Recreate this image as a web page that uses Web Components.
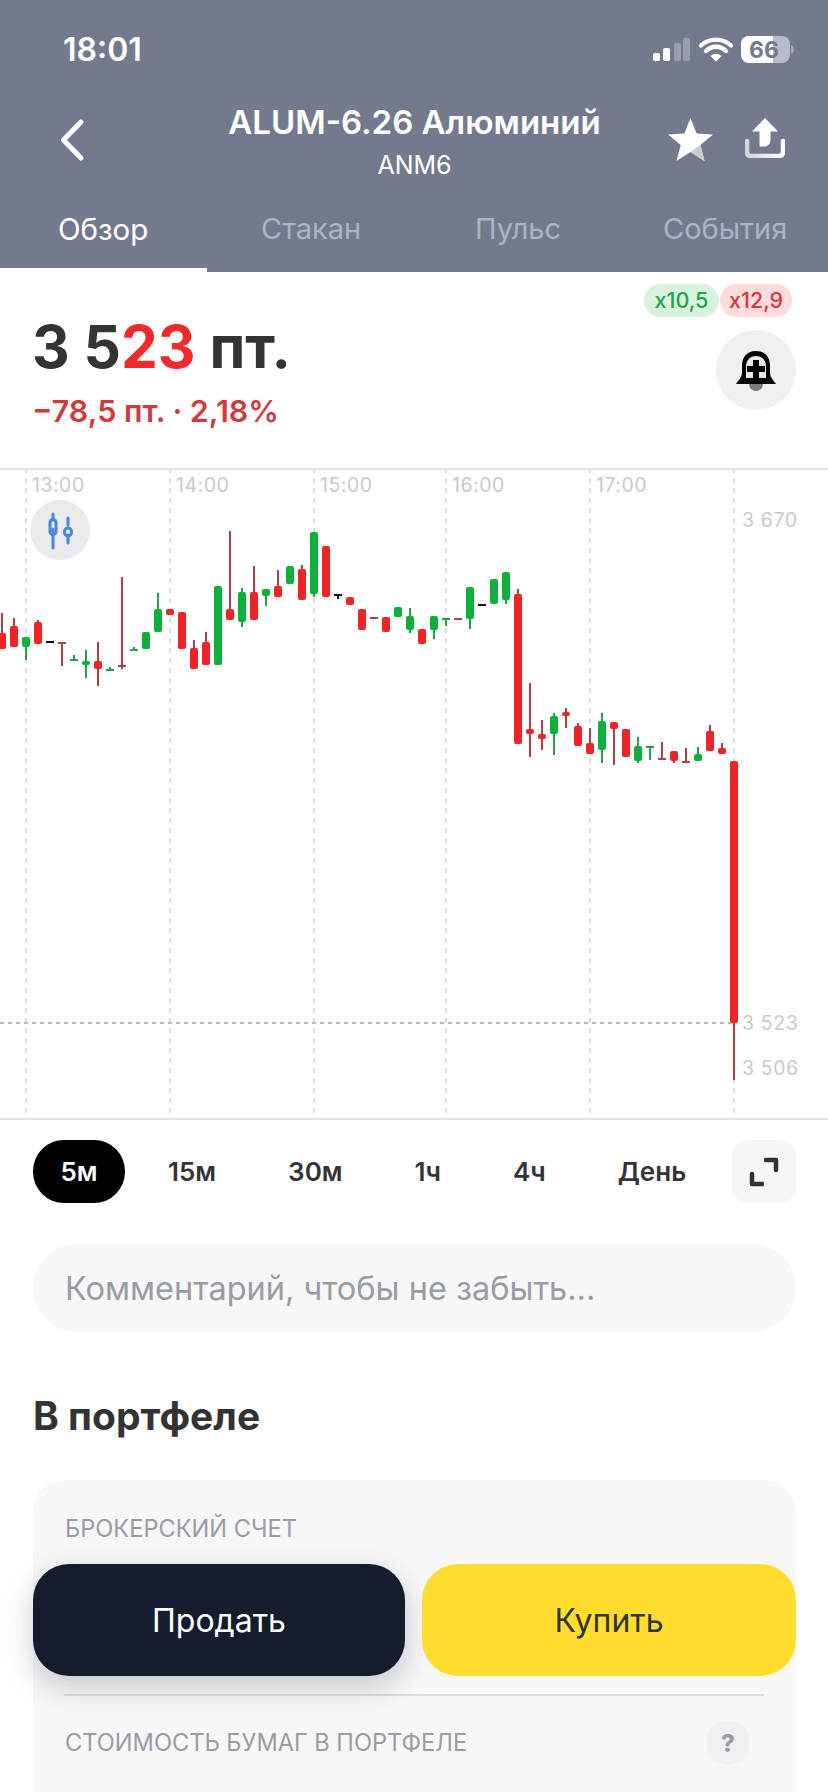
<!DOCTYPE html>
<html lang="ru">
<head>
<meta charset="utf-8">
<title>ALUM-6.26</title>
<style>
  html, body { margin: 0; padding: 0; background: #fff; }
  body { width: 828px; height: 1792px; overflow: hidden; position: relative; font-family: Inter, "Liberation Sans", sans-serif; color: #333; }
</style>
</head>
<body>
<app-header></app-header>
<quote-panel></quote-panel>
<candle-chart></candle-chart>
<period-bar></period-bar>
<note-field>Комментарий, чтобы не забыть...</note-field>
<portfolio-card></portfolio-card>
<trade-buttons></trade-buttons>

<script>
const FONT = 'Inter, "Liberation Sans", sans-serif';

class AppHeader extends HTMLElement {
  constructor() {
    super();
    this.attachShadow({ mode: 'open' });
    this.shadowRoot.innerHTML = `
      <style>
        :host { display: block; height: 272px; background: #747a8e; color: #fff; font-family: ${FONT}; }
        .status { height: 100px; box-sizing: border-box; padding: 36px 33px 0 63px; display: flex; justify-content: space-between; align-items: flex-start; }
        .time { font-size: 32px; font-weight: 600; line-height: 28px; }
        .nav { height: 96px; display: flex; align-items: flex-start; padding: 0 43px 0 60px; box-sizing: border-box; }
        .nav svg { display: block; flex: none; }
        .back { margin-top: 19px; }
        .titles { flex: 1; text-align: center; margin-right: -77px; white-space: nowrap; }
        .title { font-size: 33px; font-weight: 600; line-height: 44px; }
        .sub { font-size: 25px; line-height: 34px; margin-top: 4px; }
        .star { margin-top: 18px; position: relative; }
        .share { margin: 18px 0 0 32px; }
        .tabs { display: flex; height: 76px; position: relative; font-size: 29px; line-height: 34px; color: #aeb3c3; }
        .tabs span { position: absolute; top: 16px; }
        .tabs .on { color: #fff; font-size: 29.500px; }
        .tabs i { position: absolute; left: 0; bottom: 0; width: 207px; height: 4px; background: #fff; }
      </style>
      <div class="status">
        <span class="time">18:01</span>
        <svg width="142" height="28" viewBox="0 0 142 28">
          <rect x="0" y="17" width="7" height="8" rx="2" fill="#fff"/>
          <rect x="10" y="12" width="7" height="13" rx="2" fill="#fff"/>
          <rect x="21" y="7" width="7" height="18" rx="2" fill="#9a9fae"/>
          <rect x="30" y="2" width="7" height="23" rx="2" fill="#9a9fae"/>
          <path d="M48 9.500a22 22 0 0 1 30 0M53 15a14 14 0 0 1 20 0" fill="none" stroke="#fff" stroke-width="4.400" stroke-linecap="round"/>
          <path d="M57.500 20a8 8 0 0 1 11 0L63 25.500z" fill="#fff"/>
          <rect x="88" y="0" width="49" height="27" rx="8" fill="#b8bbc8"/>
          <path d="M96 0h24v27H96a8 8 0 0 1-8-8V8a8 8 0 0 1 8-8z" fill="#fff"/>
          <path d="M138 9a5 5 0 0 1 3 4.500a5 5 0 0 1-3 4.500z" fill="#a4a8b7"/>
          <text x="111" y="21.500" text-anchor="middle" font-size="23" font-weight="700" fill="#747a8e" font-family='${FONT}'>66</text>
        </svg>
      </div>
      <div class="nav">
        <svg class="back" width="24" height="42" viewBox="0 0 24 42"><path d="M21 3 3.500 21 21 39" fill="none" stroke="#fff" stroke-width="5" stroke-linecap="round" stroke-linejoin="round"/></svg>
        <div class="titles">
          <div class="title">ALUM-6.26 Алюминий</div>
          <div class="sub">ANM6</div>
        </div>
        <svg class="star" width="45" height="43" viewBox="0 0 45 43">
          <path d="M22.500 0l6.100 15.600 16.400 1-12.700 10.500 4.200 15.900-14-8.900-14 8.900 4.200-15.900L0 16.600l16.400-1z" fill="#fff"/>
          <path d="M22.500 34.100l14 8.900-4.200-15.900z" fill="#c9ccd6"/>
        </svg>
        <svg class="share" width="40" height="40" viewBox="0 0 40 40">
          <path d="M2 23v11q0 4 4 4h28q4 0 4-4V23" fill="none" stroke="url(#tray)" stroke-width="4.500" stroke-linecap="round"/>
          <path d="M20 0 33 13.500H25.500V22q0 5-5 6.500h-6V13.500H7z" fill="#fff"/>
          <defs><linearGradient id="tray" x1="0" x2="1" y1="0" y2="0"><stop offset="0" stop-color="#d3d5dd"/><stop offset="1" stop-color="#fff"/></linearGradient></defs>
        </svg>
      </div>
      <div class="tabs">
        <span class="on" style="left:58px">Обзор</span>
        <span style="left:261px">Стакан</span>
        <span style="left:475px">Пульс</span>
        <span style="left:663px">События</span>
        <i></i>
      </div>`;
  }
}
customElements.define('app-header', AppHeader);

class QuotePanel extends HTMLElement {
  constructor() {
    super();
    this.attachShadow({ mode: 'open' });
    this.shadowRoot.innerHTML = `
      <style>
        :host { display: flex; height: 196px; box-sizing: border-box; justify-content: space-between; padding: 12px 32px 0 32px; font-family: ${FONT}; }
        .price { font-size: 58.500px; font-weight: 700; line-height: 70px; margin-top: 28px; color: #333; }
        .price b { color: #ee2a2a; font-weight: 700; }
        .delta { font-size: 30.500px; font-weight: 600; line-height: 34px; margin-top: 12px; color: #d03a3e; white-space: nowrap; }
        .side { display: flex; flex-direction: column; align-items: flex-end; }
        .badges { display: flex; gap: 1px; margin-right: 4px; }
        .badge { height: 33px; line-height: 33px; border-radius: 17px; font-size: 21.500px; font-weight: 500; text-align: center; }
        .up { width: 75px; background: #d7f3dd; color: #1fa64b; }
        .down { width: 72px; background: #fddcdc; color: #d9363e; }
        .bell { width: 80px; height: 80px; border-radius: 50%; background: #eff0f2; margin-top: 13px; display: flex; align-items: center; justify-content: center; }
      </style>
      <div>
        <div class="price">3 5<b>23</b> пт.</div>
        <div class="delta">−78,5 пт. · 2,18%</div>
      </div>
      <div class="side">
        <div class="badges"><span class="badge up">x10,5</span><span class="badge down">x12,9</span></div>
        <div class="bell">
          <svg width="40" height="40" viewBox="0 0 40 40" style="margin-top:1px">
            <path d="M13 33a7 7 0 0 0 14 0z" fill="#7b7b7d"/>
            <path d="M20 0C10 0 6 7 6 15v6.500C6 26 3 29 0 33h40c-3-4-6-7-6-11.500V15C34 7 30 0 20 0z" fill="#000"/>
            <path d="M20 5c-6 0-10 4-10 11v11h20V16C30 9 26 5 20 5z" fill="#e6e7ea"/>
            <path d="M17 9h6v6h6v6h-6v6h-6v-6h-6v-6h6z" fill="#000"/>
          </svg>
        </div>
      </div>`;
  }
}
customElements.define('quote-panel', QuotePanel);

// [x, high, bodyTop, bodyBottom, low, colour]
const CANDLES = [
  [2,613,633,649,649,'r'],[14,618,626,647,647,'r'],[26,637,637,647,660,'g'],[38,620,622,644,644,'r'],
  [50,642,642,642,642,'k'],[62,643,643,643,666,'r'],[74,655,660,660,660,'g'],[86,650,661,665,678,'g'],
  [98,642,661,669,686,'r'],[110,667,670,670,670,'g'],[122,577,666,666,669,'r'],[134,647,650,650,650,'g'],
  [146,632,632,649,649,'g'],[158,593,609,632,632,'g'],[170,609,609,615,615,'r'],[182,612,612,649,649,'r'],
  [194,640,648,669,669,'r'],[206,632,642,665,665,'r'],[218,586,586,665,665,'g'],[230,531,609,620,620,'r'],
  [242,588,592,622,627,'g'],[254,566,592,620,620,'r'],[266,589,589,596,606,'g'],[278,570,586,597,597,'r'],
  [290,566,566,584,584,'g'],[302,565,569,600,600,'r'],[314,532,532,594,597,'g'],[326,546,546,597,597,'r'],
  [338,595,595,595,599,'k'],[350,597,597,605,605,'r'],[362,609,609,630,630,'r'],[374,618,618,618,618,'r'],
  [386,617,617,632,632,'r'],[398,607,607,617,617,'g'],[410,608,616,630,633,'g'],[422,629,629,644,644,'r'],
  [434,616,616,630,639,'g'],[446,619,619,619,626,'g'],[458,619,619,619,619,'r'],[470,587,587,619,629,'g'],
  [482,605,605,605,605,'k'],[494,579,579,604,604,'g'],[506,572,572,600,604,'g'],[518,589,594,744,744,'r'],
  [530,683,729,734,757,'r'],[542,720,734,739,750,'r'],[554,713,716,734,755,'g'],[566,708,712,716,728,'r'],
  [578,723,726,746,746,'r'],[590,728,743,754,754,'r'],[602,713,721,750,763,'g'],[614,722,722,729,765,'r'],
  [626,729,729,757,757,'r'],[638,737,746,761,763,'g'],[650,747,747,747,760,'g'],[662,742,759,759,759,'r'],
  [674,751,751,761,763,'r'],[686,748,762,762,762,'r'],[698,747,754,761,761,'g'],[710,725,731,751,751,'r'],
  [722,743,748,754,754,'r'],[734,761,761,1023,1080,'r']
];
const BODY = { r: '#ee2427', g: '#0eb03c', k: '#111' };
const WICK = { r: '#a5444b', g: '#2f9a52', k: '#111' };

class CandleChart extends HTMLElement {
  constructor() {
    super();
    this.attachShadow({ mode: 'open' });
    // svg coordinates are page y minus 468, where the chart starts
    const top = 468;
    const grid = [26, 170, 314, 446, 590, 734].map(x =>
      `<line x1="${x}" x2="${x}" y1="0" y2="651" stroke="#dcdcdc" stroke-width="2" stroke-dasharray="5 5"/>`).join('');
    const candles = CANDLES.map(([x, hi, a, b, lo, c]) => {
      let s = '';
      if (lo > hi) s += `<rect x="${x - 1}" y="${hi - top}" width="2" height="${lo - hi}" fill="${WICK[c]}"/>`;
      if (b > a) {
        s += `<rect x="${x - 4}" y="${a - top}" width="8" height="${b - a}" rx="2" fill="${BODY[c]}"/>`;
      } else {
        s += `<rect x="${x - 4}" y="${a - top - 1}" width="8" height="2" fill="${c === 'k' ? BODY.k : WICK[c]}"/>`;
      }
      return s;
    }).join('');
    const labels = [[32,'13:00'],[176,'14:00'],[320,'15:00'],[452,'16:00'],[596,'17:00']]
      .map(([x, t]) => `<span class="t" style="left:${x}px">${t}</span>`).join('');
    const prices = [[50,'3 670'],[553,'3 523'],[598,'3 506']]
      .map(([y, t]) => `<span class="p" style="top:${y - 12}px">${t}</span>`).join('');
    this.shadowRoot.innerHTML = `
      <style>
        :host { display: block; position: relative; height: 652px; box-sizing: border-box; border-top: 2px solid #e3e3e5; border-bottom: 2px solid #e3e3e5; font-family: ${FONT}; overflow: hidden; }
        svg.plot { position: absolute; left: 0; top: -2px; }
        .t, .p { position: absolute; font-size: 19.500px; line-height: 24px; color: #c9c9c9; }
        .t { top: 3px; letter-spacing: 0.5px; }
        .p { left: 742px; letter-spacing: 0.6px; }
        .tool { position: absolute; left: 30px; top: 30px; width: 60px; height: 60px; border-radius: 50%; background: #e9ebee; }
      </style>
      <svg class="plot" width="828" height="652" viewBox="0 0 828 652">
        ${grid}
        <line x1="0" x2="734" y1="555" y2="555" stroke="#b9b9b9" stroke-width="2" stroke-dasharray="4 4"/>
        ${candles}
      </svg>
      ${labels}${prices}
      <div class="tool">
        <svg width="60" height="60" viewBox="0 0 60 60" fill="none" stroke="#4a86e0" stroke-width="3" stroke-linecap="round">
          <path d="M23 14v6M23 29v19M38 18v7M38 35v8"/>
          <rect x="20" y="19.500" width="6" height="15" rx="3"/>
          <rect x="34.500" y="28" width="7" height="8" rx="3.500"/>
        </svg>
      </div>`;
  }
}
customElements.define('candle-chart', CandleChart);

class PeriodBar extends HTMLElement {
  constructor() {
    super();
    this.attachShadow({ mode: 'open' });
    const items = [['5м',1],['15м'],['30м'],['1ч'],['4ч'],['День']];
    this.shadowRoot.innerHTML = `
      <style>
        :host { display: flex; align-items: center; height: 63px; margin-top: 20px; padding: 0 32px 0 33px; font-family: ${FONT}; font-size: 26px; font-weight: 600; color: #333; }
        .on { width: 92px; height: 63px; border-radius: 31px; background: #000; color: #fff; display: flex; align-items: center; justify-content: center; margin-right: -29px; }
        .list { display: flex; align-items: center; gap: 72px; }
        .exp { margin-left: auto; width: 64px; height: 63px; border-radius: 15px; background: #f5f6f7; display: flex; align-items: center; justify-content: center; }
      </style>
      <div class="list">
        ${items.map(([t, on]) => `<span class="${on ? 'on' : ''}">${t}</span>`).join('')}
      </div>
      <div class="exp">
        <svg width="32" height="32" viewBox="0 0 32 32" fill="none" stroke="#333" stroke-width="4.500" stroke-linecap="round" stroke-linejoin="round">
          <path d="M18 4h10v10M4 18v10h10"/>
        </svg>
      </div>`;
  }
}
customElements.define('period-bar', PeriodBar);

class NoteField extends HTMLElement {
  constructor() {
    super();
    this.attachShadow({ mode: 'open' });
    this.shadowRoot.innerHTML = `
      <style>
        :host { display: flex; align-items: center; height: 88px; margin: 41px 32px 0 33px; padding: 0 32px; box-sizing: border-box; border-radius: 44px; background: #f7f7f8; color: #9a9ca5; font-family: ${FONT}; font-size: 32.500px; }
      </style>
      <slot></slot>`;
  }
}
customElements.define('note-field', NoteField);

class PortfolioCard extends HTMLElement {
  constructor() {
    super();
    this.attachShadow({ mode: 'open' });
    this.shadowRoot.innerHTML = `
      <style>
        :host { display: block; font-family: ${FONT}; }
        h2 { margin: 62px 0 0 33px; font-size: 39px; line-height: 44px; font-weight: 700; color: #333; }
        .card { margin: 42px 32px 0 33px; height: 400px; padding: 35px 32px 0; box-sizing: border-box; border-radius: 32px; background: #f7f7f8; }
        .label { font-size: 23.600px; line-height: 28px; color: #9a9ca5; }
        .rule { height: 2px; background: #dcdde0; margin: 151px -1px 0 -1px; width: 700px; }
        .row { display: flex; justify-content: space-between; align-items: center; padding-right: 14px; margin-top: 25px; }
        .q { width: 44px; height: 44px; border-radius: 50%; background: #eff0f2; color: #9a9ca5; font-weight: 800; font-size: 24px; display: flex; align-items: center; justify-content: center; }
      </style>
      <h2>В портфеле</h2>
      <div class="card">
        <div class="label">БРОКЕРСКИЙ СЧЕТ</div>
        <div class="rule"></div>
        <div class="row"><span class="label">СТОИМОСТЬ БУМАГ В ПОРТФЕЛЕ</span><span class="q">?</span></div>
      </div>`;
  }
}
customElements.define('portfolio-card', PortfolioCard);

class TradeButtons extends HTMLElement {
  constructor() {
    super();
    this.attachShadow({ mode: 'open' });
    this.shadowRoot.innerHTML = `
      <style>
        :host { position: absolute; left: 33px; right: 32px; top: 1564px; display: grid; grid-template-columns: 372px 374px; gap: 17px; font-family: ${FONT}; font-size: 32px; }
        div { height: 112px; border-radius: 36px; display: flex; align-items: center; justify-content: center; }
        .sell { background: #141d2b; color: #fff; box-shadow: 0 10px 30px rgba(20,29,43,.22); }
        .buy { background: #ffdd2d; color: #333; }
      </style>
      <div class="sell">Продать</div>
      <div class="buy">Купить</div>`;
  }
}
customElements.define('trade-buttons', TradeButtons);
</script>
</body>
</html>
